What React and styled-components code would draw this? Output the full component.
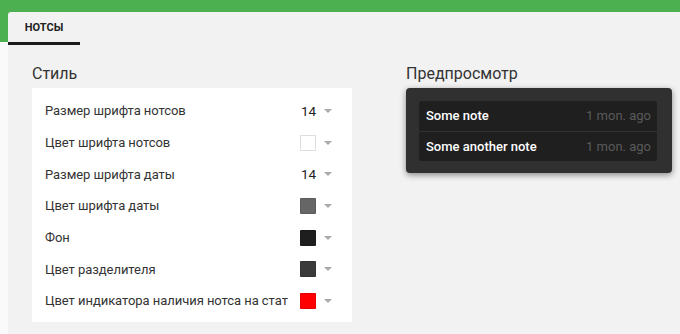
import React from 'react';
import styled, { createGlobalStyle } from 'styled-components';

const GlobalStyle = createGlobalStyle`
  html, body {
    margin: 0;
    padding: 0;
  }
  body {
    font-family: Roboto, "Noto Sans", "Liberation Sans", sans-serif;
    background: #fafafa;
    color: #333;
  }
`;

const Page = styled.div`
  width: 680px;
  height: 334px;
  overflow: hidden;
  background: linear-gradient(to bottom, #4caf50 0, #4caf50 42px, #fafafa 42px);
  padding: 12px 0 0 8px;
  box-sizing: border-box;
`;

const Panel = styled.div`
  height: 322px;
  background: #f2f2f2;
  border-top-left-radius: 3px;
  display: flex;
  flex-direction: column;
`;

const TabBar = styled.div`
  display: flex;
  height: 33px;
`;

const Tab = styled.div`
  width: 72px;
  display: flex;
  align-items: center;
  justify-content: center;
  font-size: 11px;
  font-weight: 700;
  text-transform: uppercase;
  color: #222;
  box-sizing: border-box;
  border-bottom: 3px solid ${p => (p.$active ? '#1a1a1a' : 'transparent')};
  padding-top: 1px;
`;

const Content = styled.div`
  display: flex;
  gap: 54px;
  padding: 19px 8px 0 24px;
`;

const Column = styled.div`
  width: ${p => p.$width}px;
  display: flex;
  flex-direction: column;
`;

const Heading = styled.h2`
  margin: 0 0 4px;
  font-size: 16px;
  font-weight: 400;
  line-height: 20px;
  color: #333;
`;

const Card = styled.div`
  background: #fff;
  padding: 7px 20px 5px 13px;
`;

const Row = styled.div`
  height: 31.7px;
  display: flex;
  align-items: center;
  justify-content: space-between;
  font-size: 13px;
  letter-spacing: -0.05px;
  color: #333;
`;

const Value = styled.div`
  display: flex;
  align-items: center;
  gap: 8px;
`;

const Number = styled.span`
  font-size: 13.5px;
  color: #222;
`;

const Swatch = styled.span`
  width: 16px;
  height: 16px;
  box-sizing: border-box;
  background: ${p => p.$color};
  border: 1px solid ${p => (p.$color === '#ffffff' ? '#ddd' : 'rgba(0,0,0,0.1)')};
  border-radius: 1px;
`;

const Arrow = styled.span`
  width: 0;
  height: 0;
  border-left: 4px solid transparent;
  border-right: 4px solid transparent;
  border-top: 4px solid #aaa;
`;

const Preview = styled.div`
  background: #303030;
  border-radius: 4px;
  padding: 13px 15px 12px 13px;
  box-shadow: 0 2px 6px rgba(0, 0, 0, 0.45);
`;

const NoteList = styled.div`
  background: #1f1f1f;
  border-radius: 3px;
`;

const Note = styled.div`
  height: 29.5px;
  display: flex;
  align-items: center;
  justify-content: space-between;
  padding: 0 6px 0 7px;
  font-size: 13px;
  & + & {
    border-top: 1px solid #333;
  }
`;

const NoteTitle = styled.span`
  color: #fff;
  font-weight: 500;
`;

const NoteDate = styled.span`
  color: #5a5a5a;
`;

const settings = [
  { label: 'Размер шрифта нотсов', number: 14 },
  { label: 'Цвет шрифта нотсов', color: '#ffffff' },
  { label: 'Размер шрифта даты', number: 14 },
  { label: 'Цвет шрифта даты', color: '#666666' },
  { label: 'Фон', color: '#1e1e1e' },
  { label: 'Цвет разделителя', color: '#3a3a3a' },
  { label: 'Цвет индикатора наличия нотса на стат', color: '#ff0000' },
];

const notes = [
  { title: 'Some note', date: '1 mon. ago' },
  { title: 'Some another note', date: '1 mon. ago' },
];

const App = () => (
  <>
    <GlobalStyle />
    <Page>
      <Panel>
        <TabBar>
          <Tab $active>Нотсы</Tab>
        </TabBar>
        <Content>
          <Column $width={320}>
            <Heading>Стиль</Heading>
            <Card>
              {settings.map(s => (
                <Row key={s.label}>
                  <span>{s.label}</span>
                  <Value>
                    {s.number ? <Number>{s.number}</Number> : <Swatch $color={s.color} />}
                    <Arrow />
                  </Value>
                </Row>
              ))}
            </Card>
          </Column>
          <Column $width={266}>
            <Heading>Предпросмотр</Heading>
            <Preview>
              <NoteList>
                {notes.map(n => (
                  <Note key={n.title}>
                    <NoteTitle>{n.title}</NoteTitle>
                    <NoteDate>{n.date}</NoteDate>
                  </Note>
                ))}
              </NoteList>
            </Preview>
          </Column>
        </Content>
      </Panel>
    </Page>
  </>
);

export default App;
